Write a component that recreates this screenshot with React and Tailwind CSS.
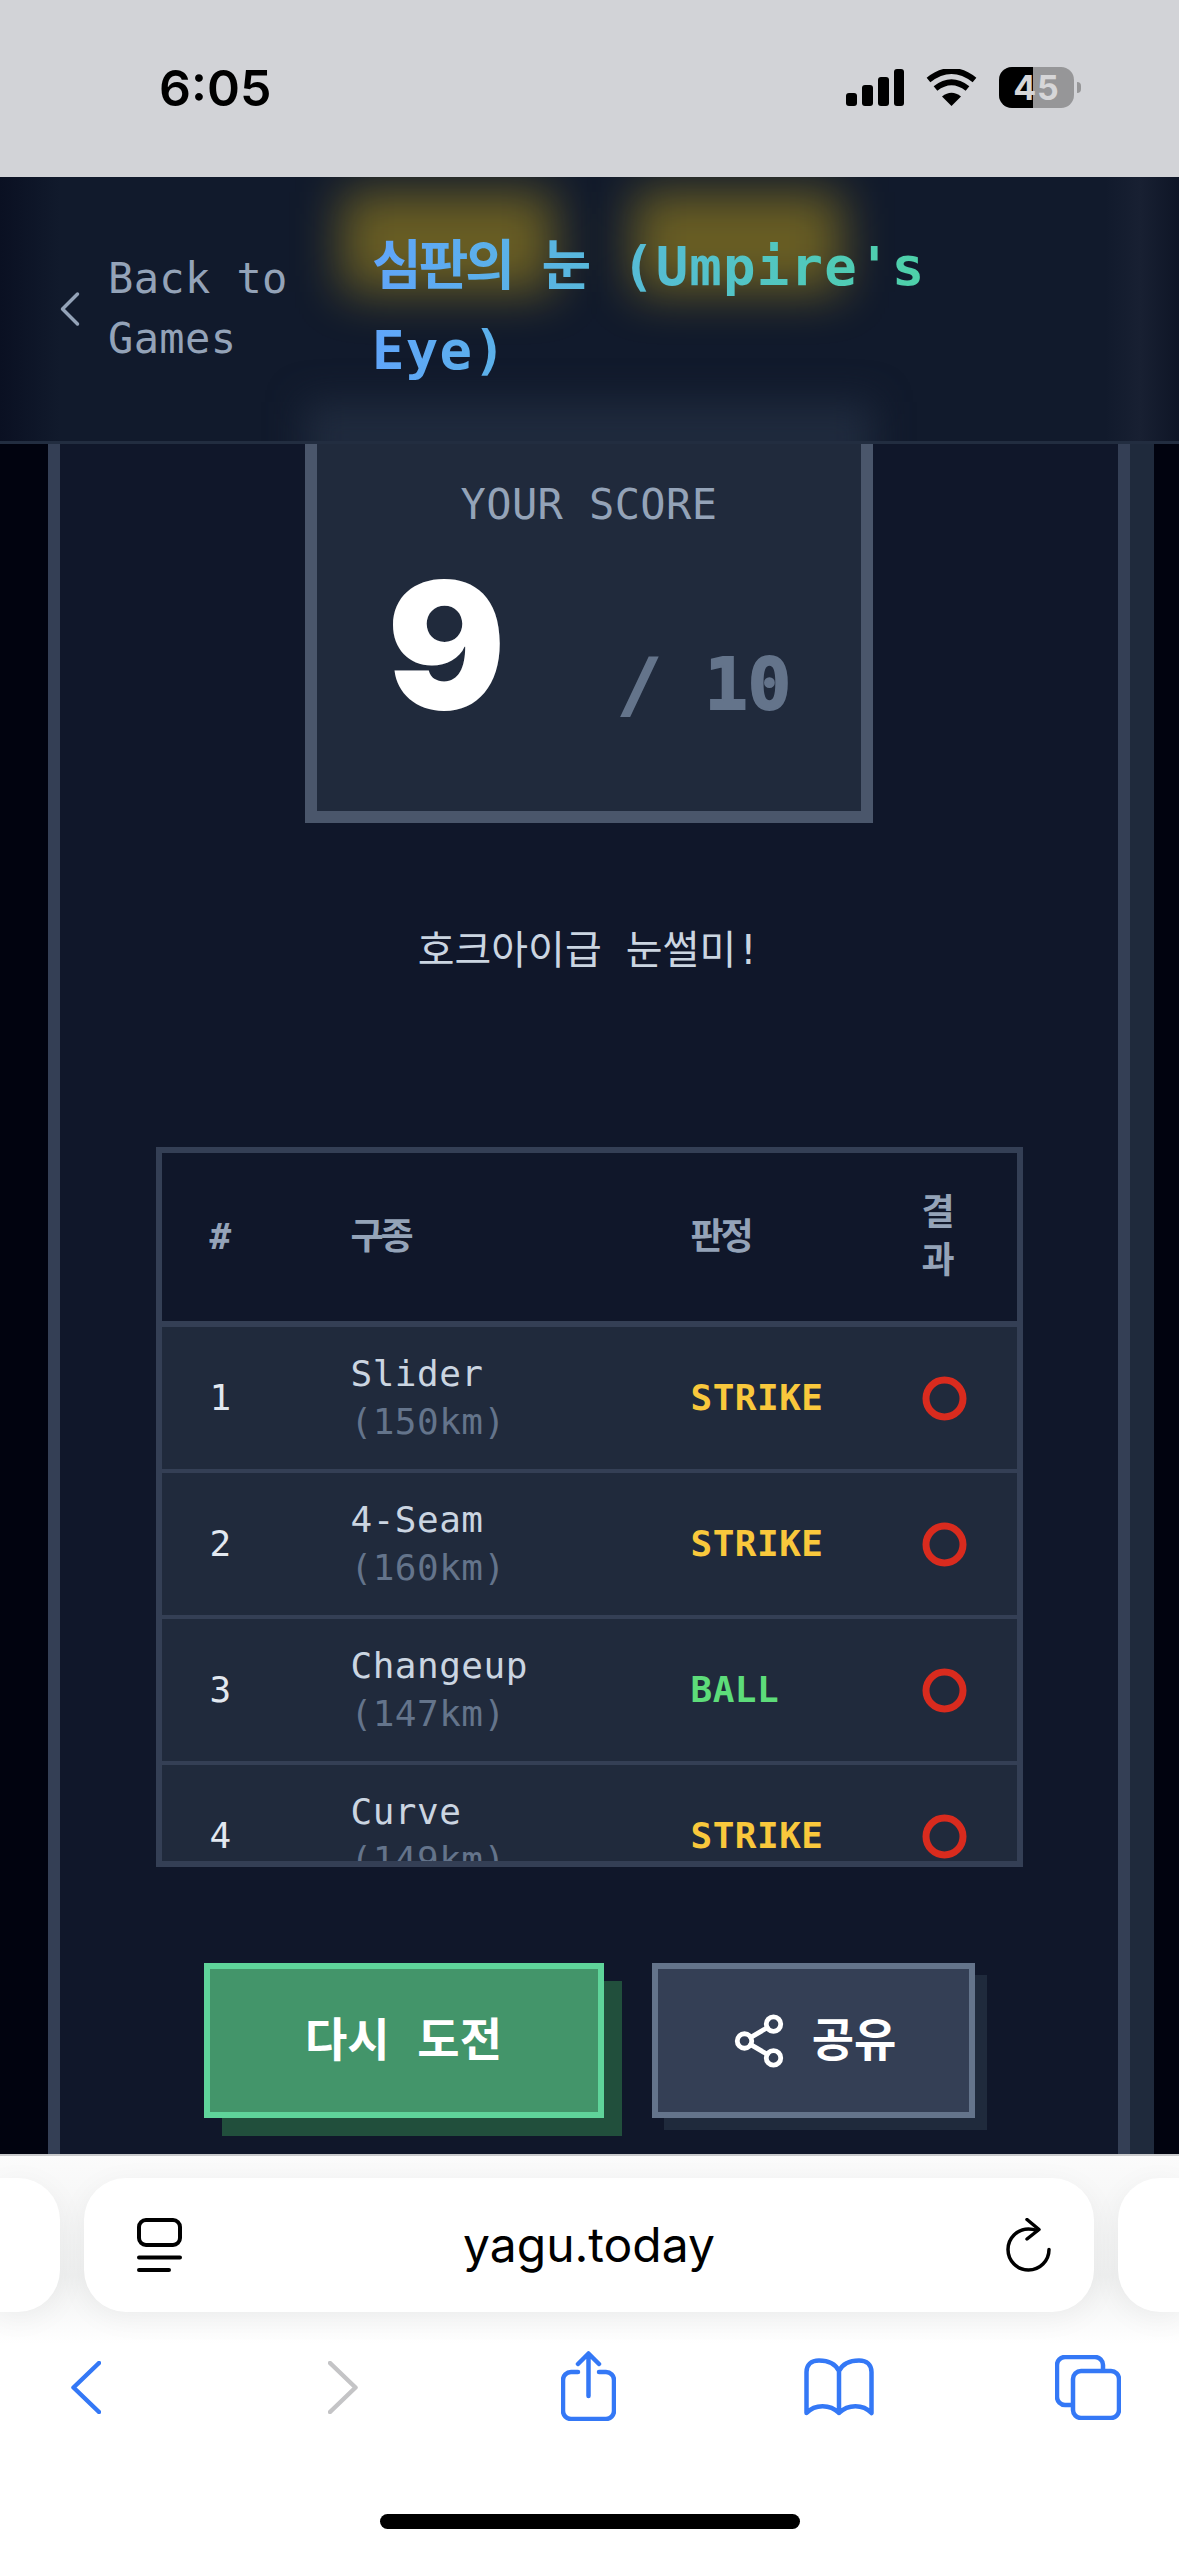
import { ChevronLeft, Share2 } from 'lucide-react';

const mono = "font-['DejaVu_Sans_Mono','Noto_Sans_CJK_KR',monospace]";

const pitches = [
  { no: 1, name: 'Slider', speed: '(150km)', call: 'STRIKE' },
  { no: 2, name: '4-Seam', speed: '(160km)', call: 'STRIKE' },
  { no: 3, name: 'Changeup', speed: '(147km)', call: 'BALL' },
  { no: 4, name: 'Curve', speed: '(149km)', call: 'STRIKE' },
];

const StatusBar = () => (
  <div className="h-[177px] shrink-0 bg-[#d2d3d7] flex items-center pl-[159px] pr-[98px] pb-[2px] justify-between">
    <span className="font-['Inter',sans-serif] font-semibold text-[50px] leading-none text-black">6:05</span>
    <div className="flex items-center gap-[22px]">
      <svg width="58" height="37" viewBox="0 0 58 37">
        <rect x="0" y="24" width="11" height="13" rx="3" />
        <rect x="16" y="16" width="11" height="21" rx="3" />
        <rect x="32" y="8" width="11" height="29" rx="3" />
        <rect x="48" y="0" width="10" height="37" rx="3" />
      </svg>
      <svg width="51" height="37" viewBox="0 0 51 37">
        <path d="M25.5 37 L16 27.5 Q25.5 20 35 27.5 Z" />
        <path d="M9.5 19.5 Q25.5 7 41.5 19.5" fill="none" stroke="#000" strokeWidth="6" />
        <path d="M2.5 11 Q25.5 -7 48.5 11" fill="none" stroke="#000" strokeWidth="6" />
      </svg>
      <div className="flex items-center gap-[3px]">
        <div className="relative w-[75px] h-[41px] rounded-[13px] overflow-hidden flex bg-[#969698]">
          <div className="w-[34px] bg-black" />
          <span className="absolute inset-0 flex items-center justify-center font-['Inter',sans-serif] font-bold text-[34px] leading-none text-[#d6d6d8] tracking-[1px]">45</span>
        </div>
        <div className="w-[4px] h-[11px] rounded-r-full bg-[#969698]" />
      </div>
    </div>
  </div>
);

const Header = () => (
  <header className={`absolute top-0 left-0 right-0 h-[267px] overflow-hidden flex items-center bg-[linear-gradient(90deg,#0a1022_0,#111a2c_60px,#111a2c_1105px,#182032_1140px,#0e1526_1179px)] border-b-[3px] border-[#222d40] pl-[40px] ${mono}`}>
    <div className="absolute left-[342px] top-[15px] w-[212px] h-[100px] bg-[#facc15]/38 blur-[24px]" />
    <div className="absolute left-[634px] top-[15px] w-[208px] h-[100px] bg-[#facc15]/38 blur-[24px]" />
    <div className="absolute left-[305px] top-[225px] w-[568px] h-[70px] bg-[#1f2a3d] blur-[18px]" />
    <ChevronLeft size={60} strokeWidth={1.4} className="relative text-[#94a3b8] shrink-0 mr-[8px]" />
    <div className="relative w-[264px] shrink-0 text-[42px] leading-[60px] tracking-[0.4px] text-[#94a3b8] pr-[80px]">Back to Games</div>
    <h1 className="relative w-[759px] text-[54px] leading-[84px] font-bold tracking-[1.2px] bg-gradient-to-r from-[#60a5fa] to-[#4ade80] bg-clip-text text-transparent">
      <span className="tracking-[-3px]">심판의 눈</span> (Umpire's
      <br />
      Eye)
    </h1>
  </header>
);

const Table = () => (
  <div className="mt-[167px] w-[867px] h-[720px] shrink-0 border-[6px] border-[#343f55] overflow-hidden bg-[#10172a]">
    <div className="grid grid-cols-[141px_340px_231px_143px] h-[168px] items-center border-b-[6px] border-[#343f55] box-content text-[36px] leading-[48px] font-bold text-[#94a3b8]">
      <div className="pl-[48px]">#</div>
      <div className="pl-[48px] tracking-[-3px]">구종</div>
      <div className="pl-[48px] tracking-[-3px]">판정</div>
      <div className="pl-[48px] pr-[48px]">결과</div>
    </div>
    {pitches.map((p) => (
      <div
        key={p.no}
        className="grid grid-cols-[141px_340px_231px_143px] h-[142px] box-content items-center bg-[#202a3c] border-b-[4px] border-[#343f55] tracking-[0.5px]"
      >
        <div className="pl-[48px] text-[36px] text-[#e2e8f0]">{p.no}</div>
        <div className="pl-[48px] text-[36px] leading-[48px]">
          <div className="text-[#cbd5e1]">{p.name}</div>
          <div className="text-[#64748b]">{p.speed}</div>
        </div>
        <div className={`pl-[48px] text-[36px] font-bold ${p.call === 'BALL' ? 'text-[#5ddc7a]' : 'text-[#f9c83c]'}`}>
          {p.call}
        </div>
        <div className="pl-[48px]">
          <svg width="45" height="45" viewBox="0 0 45 45">
            <circle cx="22.5" cy="22.5" r="18.5" fill="none" stroke="#d92b1e" strokeWidth="7" />
          </svg>
        </div>
      </div>
    ))}
  </div>
);

const Page = () => (
  <div className={`ml-[48px] w-[1082px] h-full border-x-[12px] border-[#343f55] bg-[#10172a] shadow-[24px_0_0_#1f2a3c] flex flex-col items-center ${mono}`}>
    <div className="h-[238px] shrink-0" />
    <div className="w-[568px] h-[408px] shrink-0 border-[12px] border-[#4a566b] bg-[#202a3c] flex flex-col items-center pt-[48px]">
      <div className="text-[42px] leading-[60px] tracking-[0.4px] text-[#94a3b8]">YOUR SCORE</div>
      <div className="flex items-baseline mt-[20px] h-[180px]">
        <span className="font-['Inter',sans-serif] text-[176px] leading-[180px] font-black text-white">9</span>
        <span className="ml-[112px] text-[72px] leading-none font-bold text-[#64748b] [-webkit-text-stroke:2px_#64748b]">/ 10</span>
      </div>
    </div>
    <p className="mt-[97px] text-[40px] leading-[60px] text-[#cbd5e1]">호크아이급 눈썰미!</p>
    <Table />
    <div className="flex gap-[48px] mt-[96px] shrink-0">
      <button className="w-[400px] h-[155px] border-[6px] border-[#5fd49a] bg-[#43956a] shadow-[18px_18px_0_#214f3c] text-white text-[46px] font-bold">
        다시 도전
      </button>
      <button className="w-[323px] h-[155px] border-[6px] border-[#64748b] bg-[#343f55] shadow-[12px_12px_0_#1f2a3c] text-white text-[46px] font-bold flex items-center justify-center gap-[24px]">
        <Share2 size={58} strokeWidth={2} />
        공유
      </button>
    </div>
  </div>
);

const BrowserBar = () => (
  <div className="h-[402px] shrink-0 bg-gradient-to-b from-[#fbfbfb] via-[#f0f1f1] via-30% to-white to-47% border-t-[2px] border-[#c9cacc] flex flex-col">
    <div className="flex mt-[22px] h-[134px] gap-[24px]">
      <div className="w-[60px] bg-white rounded-r-[42px] shadow-[0_6px_30px_rgba(0,0,0,0.05)]" />
      <div className="w-[1010px] bg-white rounded-[42px] shadow-[0_6px_30px_rgba(0,0,0,0.05)] flex items-center justify-between pl-[53px] pr-[43px]">
        <svg width="45" height="54" viewBox="0 0 45 54" fill="none" stroke="#000">
          <rect x="2" y="2" width="41" height="25" rx="7" strokeWidth="4" />
          <path d="M2 39.500 H43 M2 52 H32" strokeWidth="4" strokeLinecap="round" />
        </svg>
        <span className="mr-[10px] font-['Inter',sans-serif] text-[48px] leading-none text-black">yagu.today</span>
        <svg width="45" height="54" viewBox="0 0 45 54" fill="none" stroke="#000" strokeWidth="3.5" strokeLinecap="round" strokeLinejoin="round">
          <path d="M31 12.5 C28 11.5 25.500 11 22.500 11 A20.500 20.500 0 1 0 43 31.500" />
          <path d="M21 1.500 L33 11.500 L21 21" />
        </svg>
      </div>
      <div className="flex-1 bg-white rounded-l-[42px] shadow-[0_6px_30px_rgba(0,0,0,0.05)]" />
    </div>
    <div className="flex items-start pl-[71px] mt-[39px] h-[70px]">
      <svg width="30" height="53" viewBox="0 0 30 53" fill="none" stroke="#3478f6" strokeWidth="4.500" strokeLinecap="round" strokeLinejoin="round" className="mt-[10px]">
        <path d="M28 2 L2.500 26.500 L28 51" />
      </svg>
      <svg width="30" height="53" viewBox="0 0 30 53" fill="none" stroke="#c4c4c6" strokeWidth="4.500" strokeLinecap="round" strokeLinejoin="round" className="ml-[227px] mt-[10px]">
        <path d="M2 2 L27.500 26.500 L2 51" />
      </svg>
      <svg width="55" height="70" viewBox="0 0 55 70" fill="none" stroke="#3478f6" strokeWidth="4.500" strokeLinecap="round" strokeLinejoin="round" className="ml-[203px]">
        <path d="M17 21 H10 a8 8 0 0 0 -8 8 V60 a8 8 0 0 0 8 8 H45 a8 8 0 0 0 8 -8 V29 a8 8 0 0 0 -8 -8 H38" />
        <path d="M27.500 45 V3 M17 13 L27.500 2.500 L38 13" />
      </svg>
      <svg width="70" height="58" viewBox="0 0 70 58" fill="none" stroke="#3478f6" strokeWidth="4.500" strokeLinecap="round" strokeLinejoin="round" className="ml-[188px] mt-[7px]">
        <path d="M35 13 C31 5 24 2.500 15 2.500 C7 2.500 2.500 7 2.500 14 V55 C11 46 26 46 35 55 C44 46 59 46 67.500 55 V14 C67.500 7 63 2.500 55 2.500 C46 2.500 39 5 35 13 V55" />
      </svg>
      <svg width="66" height="65" viewBox="0 0 66 65" fill="none" stroke="#3478f6" strokeWidth="4.500" strokeLinecap="round" strokeLinejoin="round" className="ml-[181px] mt-[4px]">
        <path d="M16 50 H10 a8 8 0 0 1 -8 -8 V10 a8 8 0 0 1 8 -8 H40 a8 8 0 0 1 8 8 V15" />
        <rect x="18" y="16" width="46" height="47" rx="8" />
      </svg>
    </div>
    <div className="w-[420px] h-[15px] rounded-full bg-black mx-auto mt-[93px]" />
  </div>
);

const App = () => {
  return (
    <div className="w-[1179px] h-[2556px] flex flex-col overflow-hidden bg-white">
      <StatusBar />
      <main className="relative flex-1 min-h-0 overflow-hidden bg-[#01030f]">
        <Page />
        <Header />
      </main>
      <BrowserBar />
    </div>
  );
};

export default App;
